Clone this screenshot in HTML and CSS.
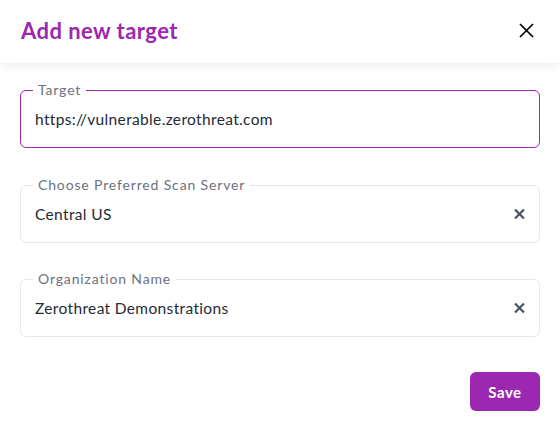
FILE: index.html
```html
<!DOCTYPE html>
<html>
<head>
<meta charset="utf-8">
<link rel="stylesheet" href="styles.css">
</head>
<body>
<div class="modal">
  <header class="modal-header">
    <h1 class="title">Add new target</h1>
    <button class="close" aria-label="Close">
      <svg width="15" height="15" viewBox="0 0 15 15"><path d="M1 1L14 14M14 1L1 14" stroke="#000" stroke-width="1.7" fill="none"/></svg>
    </button>
  </header>
  <div class="modal-body">
    <fieldset class="field field-active">
      <legend class="legend">Target</legend>
      <div class="value">https://vulnerable.zerothreat.com</div>
    </fieldset>
    <fieldset class="field">
      <legend class="legend">Choose Preferred Scan Server</legend>
      <div class="value-row">
        <span class="value">Central US</span>
        <svg class="clear" width="11" height="10" viewBox="0 0 11 10"><path d="M1 0.5L10 9.5M10 0.5L1 9.5" stroke="#4b5260" stroke-width="2.2" fill="none"/></svg>
      </div>
    </fieldset>
    <fieldset class="field">
      <legend class="legend">Organization Name</legend>
      <div class="value-row">
        <span class="value">Zerothreat Demonstrations</span>
        <svg class="clear" width="11" height="10" viewBox="0 0 11 10"><path d="M1 0.5L10 9.5M10 0.5L1 9.5" stroke="#4b5260" stroke-width="2.2" fill="none"/></svg>
      </div>
    </fieldset>
    <div class="actions">
      <button class="save">Save</button>
    </div>
  </div>
</div>
</body>
</html>
```
FILE: styles.css
```css
* { box-sizing: border-box; }
html, body { margin: 0; padding: 0; background: #fff; }
body { font-family: Lato, "Noto Sans", sans-serif; }
.modal { width: 560px; height: 436px; background: #fff; }
.modal-header {
  height: 63px;
  display: flex;
  align-items: center;
  justify-content: space-between;
  padding: 0 26px 3px 21px;
  box-shadow: 0 3px 10px rgba(0,0,0,0.07);
  position: relative;
}
.title {
  margin: 0;
  font-size: 22px;
  font-weight: 700;
  color: #9c27b0;
  letter-spacing: 0.45px;
}
.close {
  border: 0; background: none; padding: 0; width: 15px; height: 15px;
  display: flex; cursor: pointer;
}
.modal-body { padding: 19px 20px 0 20px; }
.field {
  margin: 0 0 29px 0;
  border: 1px solid #e5e7eb;
  border-radius: 6px;
  padding: 11px 14px 18px 12px;
  min-width: 0;
}
.field:nth-of-type(2) { margin-bottom: 28px; }
.field-active { border-color: #9c27b0; }
.legend {
  padding: 0 5px;
  font-size: 14px;
  line-height: 16px;
  color: #6b7280;
  letter-spacing: 0.85px;
}
.value {
  display: block;
  padding-left: 2px;
  font-size: 15.5px;
  line-height: 20px;
  color: #252a33;
  letter-spacing: 0.35px;
}
.value-row { display: flex; align-items: center; justify-content: space-between; }
.clear { flex: none; }
.actions { display: flex; justify-content: flex-end; padding-top: 6px; }
.save {
  width: 70px; height: 39px;
  border: 0; border-radius: 6px;
  background: #9c27b0; color: #fff;
  font-family: Lato, sans-serif;
  font-size: 15px; font-weight: 700;
  letter-spacing: 0.5px;
}
```
